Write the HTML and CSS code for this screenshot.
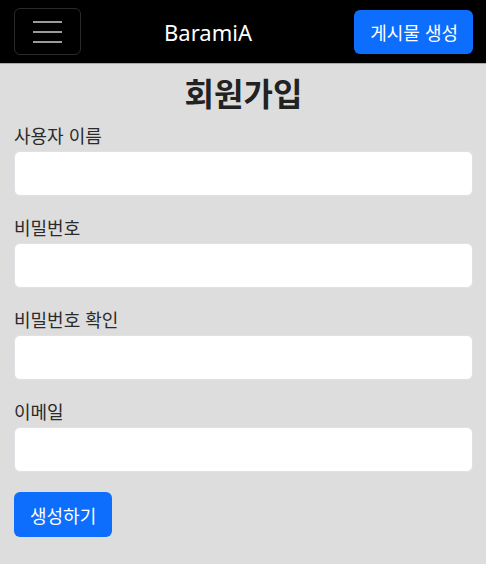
FILE: index.html
```html
<!DOCTYPE html>
<html lang="ko">
<head>
    <meta charset="UTF-8">
    <meta name="viewport" content="width=device-width, initial-scale=1.0">
    <title>회원가입</title>
    <link rel="stylesheet" href="styles.css">
</head>
<body>
    <nav class="navbar">
        <button class="toggler" type="button" aria-label="메뉴">
            <svg width="29" height="22" viewBox="0 0 29 22">
                <rect x="0" y="0" width="29" height="2" fill="#9a9a9a"/>
                <rect x="0" y="10" width="29" height="2" fill="#9a9a9a"/>
                <rect x="0" y="20" width="29" height="2" fill="#9a9a9a"/>
            </svg>
        </button>
        <a class="brand" href="#">BaramiA</a>
        <a class="btn nav-btn" href="#">게시물 생성</a>
    </nav>

    <div class="container">
        <h1 class="title">회원가입</h1>
        <form class="signup">
            <div class="form-item">
                <label for="username">사용자 이름</label>
                <input type="text" id="username">
            </div>
            <div class="form-item">
                <label for="password">비밀번호</label>
                <input type="password" id="password">
            </div>
            <div class="form-item">
                <label for="password2">비밀번호 확인</label>
                <input type="password" id="password2">
            </div>
            <div class="form-item">
                <label for="email">이메일</label>
                <input type="email" id="email">
            </div>
            <button type="submit" class="btn submit-btn">생성하기</button>
        </form>
    </div>
</body>
</html>
```

FILE: styles.css
```css
* {
    margin: 0;
    padding: 0;
    box-sizing: border-box;
}

body {
    font-family: "Noto Sans", "Noto Sans CJK KR", sans-serif;
    background-color: #dddddd;
    color: #212529;
}

.navbar {
    display: flex;
    align-items: center;
    height: 64px;
    padding: 0 13px 0 14px;
    background-color: #000;
    border-bottom: 1px solid #a8a8a8;
}

.toggler {
    width: 67px;
    height: 47px;
    display: flex;
    align-items: center;
    justify-content: center;
    background: transparent;
    border: 1px solid #2a2a2a;
    border-radius: 6px;
}

.brand {
    margin-left: 83px;
    color: #fff;
    font-size: 22px;
    text-decoration: none;
}

.btn {
    display: flex;
    align-items: center;
    height: 45px;
    background-color: #0d6efd;
    color: #fff;
    font-family: "Noto Sans CJK KR", sans-serif;
    font-size: 18px;
    border: none;
    border-radius: 6px;
    text-decoration: none;
    cursor: pointer;
}

.nav-btn {
    margin-left: auto;
    height: 44px;
    padding: 0 15px 0 16px;
}

.container {
    padding: 0 13px 0 14px;
}

.title {
    margin-top: 10px;
    text-align: center;
    font-family: "Noto Sans CJK KR", sans-serif;
    font-size: 32px;
    font-weight: 700;
    line-height: 36px;
    color: #222;
}

.form-item {
    display: flex;
    flex-direction: column;
    margin-bottom: 20px;
}

.form-item:first-child {
    margin-top: 14px;
}

.form-item label {
    font-family: "Noto Sans CJK KR", sans-serif;
    font-size: 18px;
    line-height: 22px;
    margin-bottom: 5px;
    color: #2b2b2b;
}

.form-item input {
    height: 45px;
    border: 1px solid #dee2e6;
    border-radius: 6px;
    background: #fff;
    padding: 0 12px;
    font-size: 16px;
}

.submit-btn {
    padding: 0 16px;
}
```
